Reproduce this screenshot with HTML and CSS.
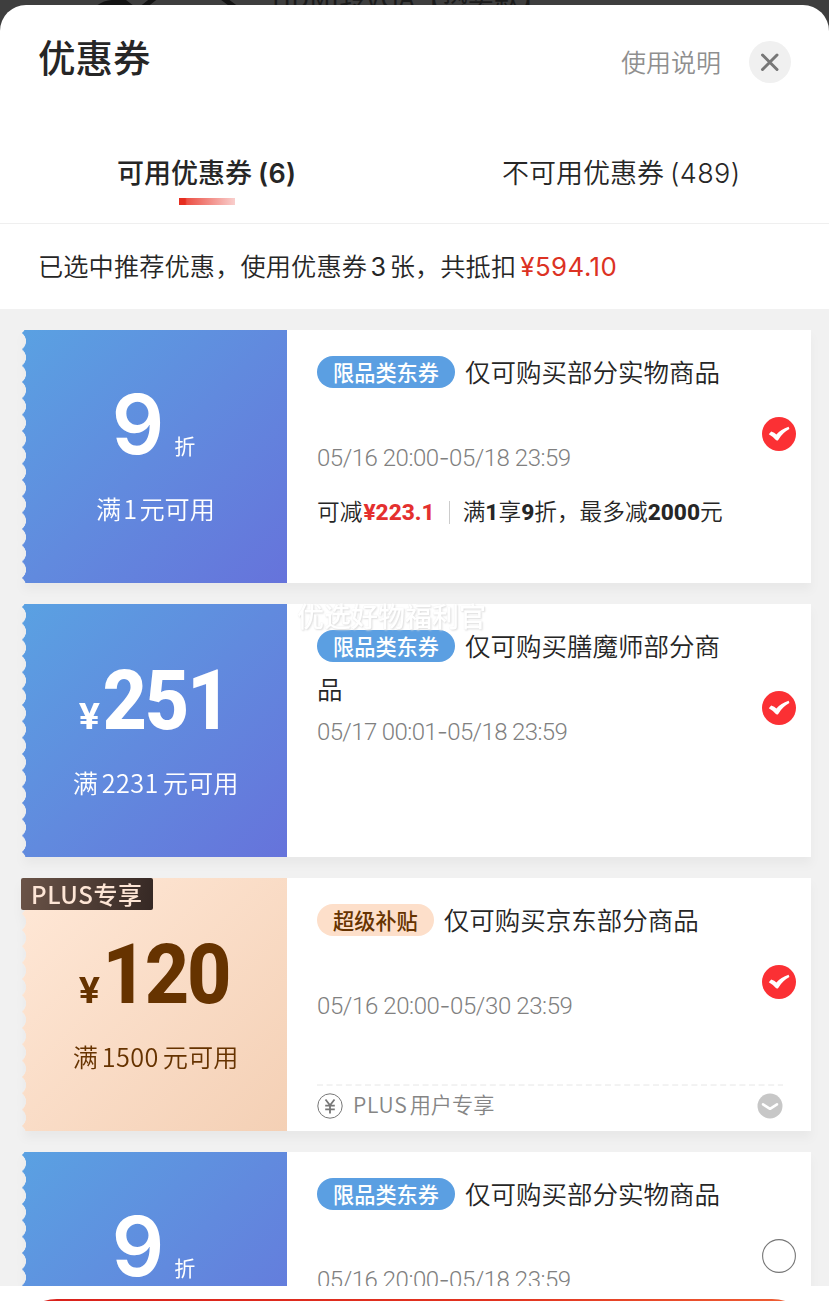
FILE: index.html
```html
<!DOCTYPE html>
<html lang="zh-CN">
<head>
<meta charset="utf-8">
<title>优惠券</title>
<link rel="stylesheet" href="styles.css">
</head>
<body>
<svg class="defs" width="0" height="0">
  <symbol id="checked" viewBox="0 0 34 34">
    <circle cx="17" cy="17" r="17" fill="#fb3034"/>
    <path d="M6.8 17.2 L9.2 14.6 Q12.6 15.8 14.4 17.6 Q18.8 12.2 26.6 9.8 L27.4 12 Q20.8 15.4 16.6 22.4 Q15.2 24.6 13.6 22.8 Q10.8 19.4 6.8 17.2Z" fill="#fff"/>
  </symbol>
</svg>
<div class="screen">
  <div class="backdrop">
    <svg class="cable" width="160" height="8" viewBox="0 0 160 8"><path d="M0 6 Q8 0 16 0 H30 L38 6Z" fill="#141414"/><path d="M46 8 L60 -3 M124 -4 L140 8" stroke="#141414" stroke-width="5" fill="none"/></svg>
    <span class="backdrop-text">HDMI转VGA【热卖款】</span>
  </div>
  <section class="sheet">
    <header class="header">
      <h1 class="title">优惠券</h1>
      <span class="help">使用说明</span>
      <span class="close"><svg width="42" height="42" viewBox="0 0 42 42"><path d="M13.5 14 L28 28.5 M28 14 L13.5 28.5" stroke="#777" stroke-width="3" stroke-linecap="round"/></svg></span>
    </header>
    <nav class="tabs">
      <div class="tab tab-active"><span class="label">可用优惠券<b class="count">(6)</b></span><i class="underline"></i></div>
      <div class="tab"><span class="label">不可用优惠券<span class="count">(489)</span></span></div>
    </nav>
    <p class="summary">已选中推荐优惠，使用优惠券<span class="num">3</span>张，共抵扣<span class="total">¥594.10</span></p>
    <main class="list">
      <article class="card">
        <div class="face">
          <div class="amount discount"><span class="nine">9</span><span class="unit">折</span></div>
          <div class="cond">满<span class="n n-one">1</span>元可用</div>
        </div>
        <div class="info">
          <div class="name"><span class="tag">限品类东券</span>仅可购买部分实物商品</div>
          <div class="date">05/16 20:00<i>-</i>05/18 23:59</div>
          <div class="detail"><span>可减<b class="red">¥223.1</b></span><i class="bar"></i><span>满<b>1</b>享<b>9</b>折，最多减<b>2000</b>元</span></div>
          <svg class="check"><use href="#checked"/></svg>
        </div>
      </article>
      <article class="card">
        <div class="face">
          <div class="amount"><span class="yen">¥</span><span class="big">251</span></div>
          <div class="cond">满<span class="n">2231</span>元可用</div>
        </div>
        <div class="info">
          <span class="watermark">优选好物福利官</span>
          <div class="name"><span class="tag">限品类东券</span>仅可购买膳魔师部分商品</div>
          <div class="date date-tight">05/17 00:01<i>-</i>05/18 23:59</div>
          <svg class="check"><use href="#checked"/></svg>
        </div>
      </article>
      <article class="card plus">
        <div class="face">
          <div class="amount"><span class="yen">¥</span><span class="big">120</span></div>
          <div class="cond">满<span class="n">1500</span>元可用</div>
        </div>
        <span class="ribbon">PLUS<b>专享</b></span>
        <div class="info">
          <div class="name"><span class="tag">超级补贴</span>仅可购买京东部分商品</div>
          <div class="date date-loose">05/16 20:00<i>-</i>05/30 23:59</div>
          <svg class="check"><use href="#checked"/></svg>
          <div class="more">
            <svg class="dash" width="466" height="2"><path d="M0 1H466" stroke="#e6e6e6" stroke-width="1" stroke-dasharray="6 3.6"/></svg>
            <svg width="26" height="26" viewBox="0 0 26 26"><circle cx="13" cy="13" r="12.2" fill="none" stroke="#777" stroke-width="1"/><path d="M8.5 6.5 L13 12.2 L17.5 6.5 M13 12 V20.5 M8.2 12.6 H17.8 M8.2 16.4 H17.8" fill="none" stroke="#777" stroke-width="1.8"/></svg>
            <span class="more-text"><span class="latin">PLUS</span>用户专享</span>
            <svg width="26" height="26" viewBox="0 0 26 26"><circle cx="13" cy="13" r="12.5" fill="#c7c7c7"/><path d="M6 11.3 L13 15.8 L20 11.3" fill="none" stroke="#fff" stroke-width="2.6" stroke-linecap="round" stroke-linejoin="round"/></svg>
          </div>
        </div>
      </article>
      <article class="card">
        <div class="face">
          <div class="amount discount"><span class="nine">9</span><span class="unit">折</span></div>
          <div class="cond">满<span class="n n-one">1</span>元可用</div>
        </div>
        <div class="info">
          <div class="name"><span class="tag">限品类东券</span>仅可购买部分实物商品</div>
          <div class="date">05/16 20:00<i>-</i>05/18 23:59</div>
          <svg class="check" viewBox="0 0 34 34"><circle cx="17" cy="17" r="16.4" fill="#fff" stroke="#777" stroke-width="1.1"/></svg>
        </div>
      </article>
    </main>
    <footer class="footer"><div class="confirm"></div></footer>
  </section>
</div>
</body>
</html>
```
FILE: styles.css
```css
* { box-sizing: border-box; }
body { margin: 0; font-family: "Noto Sans CJK SC", sans-serif; color: #262626; }
i { font-style: normal; }
.defs { position: absolute; }
.screen { position: relative; width: 829px; height: 1301px; overflow: hidden; background: #3e3e3e; padding-top: 5px; }
.backdrop { position: absolute; inset: 0 0 auto 0; height: 30px; overflow: hidden; }
.cable { position: absolute; left: 96px; top: 0; }
.backdrop-text { position: absolute; left: 272px; top: -17px; font-size: 26px; line-height: 28px; letter-spacing: 0.4px; color: #1b1b1b; white-space: nowrap; }
.sheet { position: relative; height: 1296px; background: #fff; border-radius: 26px 26px 0 0; overflow: hidden; display: flex; flex-direction: column; }

.header { height: 115px; flex: none; display: flex; align-items: flex-start; padding: 0 38px; }
.title { margin: 29px auto 0 0; font-size: 37.5px; line-height: 44px; font-weight: 500; }
.help { margin: 40px 28px 0 0; font-size: 25px; line-height: 32px; color: #8f8f8f; font-weight: 350; }
.close { width: 42px; height: 42px; margin-top: 36px; border-radius: 50%; background: #f0f0f0; }
.close svg { display: block; }

.tabs { height: 104px; flex: none; display: flex; border-bottom: 1px solid #efefef; }
.tab { flex: 1; display: flex; flex-direction: column; align-items: center; padding-top: 33px; font-size: 27px; line-height: 38px; font-weight: 350; white-space: nowrap; }
.label { margin-right: 1px; }
.tab-active { font-weight: 500; }
.count { font-family: Inter, sans-serif; margin-left: 6px; letter-spacing: 0.4px; }
.tab-active .count { font-weight: 600; }
.underline { width: 56px; height: 7px; margin-top: 5px; background: linear-gradient(90deg, #e62e20 0 11%, #ec5146 14%, #f9cfcd); }

.summary { height: 85px; flex: none; margin: 0; padding: 21px 0 0 38px; font-size: 25.2px; letter-spacing: 0.12px; line-height: 40px; white-space: nowrap; font-weight: 350; }
.num { font-family: Inter, sans-serif; font-weight: 400; margin: 0 3.5px; }
.total { font-family: Inter, sans-serif; font-weight: 400; color: #dc3223; margin-left: 4px; font-size: 25.8px; letter-spacing: 0.5px; }

.list { flex: 1; min-height: 0; overflow: hidden; background: #f1f1f1; padding: 21px 18px 0 22px; display: flex; flex-direction: column; gap: 21px; }
.card { position: relative; flex: none; height: 253px; display: flex; filter: drop-shadow(0 7px 5px rgba(0,0,0,.035)); }
.face { width: 265px; background: linear-gradient(135deg, #5aa1e2, #618ade 50%, #6673db); color: #fff; display: flex; flex-direction: column; align-items: center; padding-top: 47px;
  -webkit-mask: radial-gradient(circle at -6px 50%, transparent 9.7px, #000 10.3px) 0 3px / 100% 16.33px repeat-y;
  mask: radial-gradient(circle at -6px 50%, transparent 9.7px, #000 10.3px) 0 3px / 100% 16.33px repeat-y; }
.amount { height: 100px; display: flex; align-items: baseline; line-height: 100px; white-space: nowrap; }
.discount { margin-left: -2px; margin-top: -2px; margin-bottom: 2px; }
.nine { font: 600 82px/100px Inter, sans-serif; }
.unit { font-size: 21px; margin-left: 10px; }
.yen { font: 700 36px/100px Inter, sans-serif; margin-left: -1px; transform: scaleX(1.06); }
.big { font: 800 83px/100px Roboto, sans-serif; letter-spacing: -2.5px; margin-left: -6px; transform: scaleX(.93); transform-origin: right; }
.cond { margin-top: 13px; margin-left: 2px; font-size: 25.2px; line-height: 36px; font-weight: 350; }
.n { margin: 0 4px; letter-spacing: 0.4px; }
.n-one { margin: 0 2px; }

.info { position: relative; flex: 1; background: #fff; padding: 19px 80px 0 30px; }
.name { height: 88px; font-size: 25.5px; line-height: 43px; font-weight: 350; }
.tag { display: inline-block; height: 32px; padding: 0 16px; margin-right: 10px; border-radius: 16px; background: #5b9fe2; color: #fff; font-size: 21.2px; line-height: 31px; font-weight: 500; vertical-align: 1px; }
.date { height: 42px; font: 300 24px/42px Roboto, sans-serif; letter-spacing: -0.48px; color: #808080; white-space: nowrap; }
.date-tight { letter-spacing: -0.63px; }
.date-loose { letter-spacing: -0.4px; }
.date i { font-family: Inter, sans-serif; }
.detail { display: flex; align-items: center; margin-top: 13px; height: 40px; font-size: 22.7px; line-height: 40px; white-space: nowrap; font-weight: 350; }
.detail b { font-family: Roboto, sans-serif; font-weight: 800; }
.detail .red { color: #e4302f; margin-left: 1px; }
.bar { width: 1px; height: 23px; background: #ccc; margin: 0 13px 0 14px; }
.check { position: absolute; right: 15px; top: 87px; width: 34px; height: 34px; }
.watermark { position: absolute; left: 10px; top: -8px; font-size: 27px; line-height: 40px; color: #fff; font-weight: 500; text-shadow: 1px 1px 2px #dcdcdc, 0 0 1px #e8e8e8; white-space: nowrap; }

.plus .face { background: linear-gradient(135deg, #ffe8d7, #f4d0b5); color: #663300; }
.plus .tag { background: #fddfca; color: #663300; }
.ribbon { position: absolute; left: -1px; top: 0; width: 132px; height: 32px; border-radius: 2px; background: linear-gradient(100deg, #6b5448, #352824); color: #fde5d5; font-size: 24px; line-height: 31px; padding-left: 10px; letter-spacing: 0.6px; font-weight: 500; white-space: nowrap; }
.ribbon b { font-weight: 500; }
.more { position: absolute; left: 30px; right: 28px; top: 206px; height: 42px; display: flex; align-items: center; padding-top: 2px; }
.dash { position: absolute; left: 0; top: 0; }
.more-text { flex: 1; margin: -4px 0 0 10px; font-size: 21.2px; line-height: 36px; color: #858585; font-weight: 350; }
.latin { letter-spacing: 0.8px; margin-right: 2px; }

.footer { flex: none; height: 15px; background: #fff; padding: 13px 12px 0; overflow: hidden; }
.confirm { height: 90px; border-radius: 45px; background: linear-gradient(90deg, #d9201b, #e2331f 60%, #ef6135); }
```
